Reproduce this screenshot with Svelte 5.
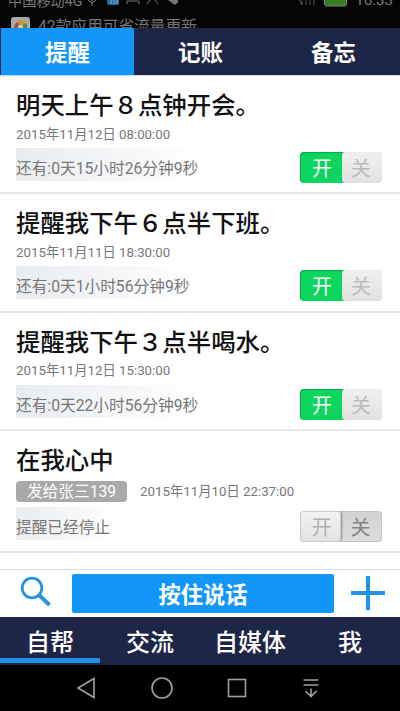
<script lang="ts">
  type Reminder = {
    title: string;
    time: string;
    status: string;
    on: boolean;
    recipient?: string;
  };

  const tabs = ['提醒', '记账', '备忘'];
  const sections = ['自帮', '交流', '自媒体', '我'];

  let activeTab = $state(0);
  let activeSection = $state(0);

  let reminders: Reminder[] = $state([
    {
      title: '明天上午８点钟开会。',
      time: '2015年11月12日 08:00:00',
      status: '还有:0天15小时26分钟9秒',
      on: true
    },
    {
      title: '提醒我下午６点半下班。',
      time: '2015年11月11日 18:30:00',
      status: '还有:0天1小时56分钟9秒',
      on: true
    },
    {
      title: '提醒我下午３点半喝水。',
      time: '2015年11月12日 15:30:00',
      status: '还有:0天22小时56分钟9秒',
      on: true
    },
    {
      title: '在我心中',
      time: '2015年11月10日 22:37:00',
      status: '提醒已经停止',
      on: false,
      recipient: '发给张三139'
    }
  ]);
</script>

<div class="phone">
  <header class="system">
    <div class="carrier">
      <span>中国移动4G</span>
      <svg class="signals" width="92" height="8" viewBox="0 0 92 8" fill="none" stroke="#777">
        <path d="M6 0v6M2 0l4 3 4-3" />
        <rect x="21" y="-5" width="12" height="10" rx="2" fill="#286f9d" stroke="none" />
        <path d="M25 0v4M28 0v4M31 0v4" stroke="#8bb5cc" />
        <path d="M41 4V1h12v3M61 4l3-4M72 4l-3-4" />
        <path d="M82 0h10v2l-3 3-3-2z" fill="#777" stroke="none" />
      </svg>
      <svg class="battery" width="54" height="8" viewBox="0 0 54 8">
        <path d="M1 0l3 5V0M8 0v5M12 0v5M16 0v5" fill="none" stroke="#555" />
        <path d="M26.500 -2v6q0 2 2 2h18q2 0 2-2v-6z" fill="#377d20" stroke="#777" />
      </svg>
      <span class="clock">16:33</span>
    </div>
    <div class="notice">
      <svg width="19" height="13" viewBox="0 0 19 13">
        <rect width="19" height="20" rx="3" fill="#aaa" />
        <path d="M3 12a7 7 0 0 1 6-8l4 4-4 5z" fill="#b24d38" />
        <path d="M6 5q6-5 10 3l-5 1z" fill="#c49b32" />
        <path d="M10 8l6-1v6h-6z" fill="#56844d" />
        <circle cx="9.500" cy="10" r="2.500" fill="#ccc" />
      </svg>
      <span>42款应用可省流量更新</span>
    </div>
  </header>

  <nav class="tabs">
    {#each tabs as tab, i (tab)}
      <button class:active={activeTab === i} onclick={() => (activeTab = i)}>{tab}</button>
    {/each}
  </nav>

  <main>
    {#each reminders as item (item.title)}
      <article class:shared={item.recipient}>
        <h2>{item.title}</h2>
        <div class="meta">
          {#if item.recipient}
            <span class="recipient">{item.recipient}</span>
          {/if}
          <time>{item.time}</time>
        </div>
        <div class="foot">
          <span class="status">{item.status}</span>
          <button class="switch" class:on={item.on} onclick={() => (item.on = !item.on)}>
            <span class="half left">开</span>
            <span class="half right">关</span>
          </button>
        </div>
      </article>
    {/each}
  </main>

  <div class="compose">
    <button class="icon" aria-label="搜索">
      <svg width="32" height="32" viewBox="0 0 32 32" fill="none" stroke="#2391e6">
        <circle cx="12" cy="12" r="9.800" stroke-width="2.800" />
        <path d="M19 19L29.500 29" stroke-width="3.800" />
      </svg>
    </button>
    <button class="talk">按住说话</button>
    <button class="icon" aria-label="添加">
      <svg width="34" height="34" viewBox="0 0 34 34" fill="none" stroke="#2391e6">
        <path d="M17 0v34M0 17h34" stroke-width="4" />
      </svg>
    </button>
  </div>

  <nav class="sections">
    {#each sections as section, i (section)}
      <button class:active={activeSection === i} onclick={() => (activeSection = i)}>
        {section}
      </button>
    {/each}
  </nav>

  <footer>
    <svg width="20" height="22" viewBox="0 0 20 22"><path d="M18 1.500v19L2 11z" /></svg>
    <svg width="22" height="22" viewBox="0 0 22 22"><circle cx="11" cy="11" r="10" /></svg>
    <svg width="20" height="20" viewBox="0 0 20 20">
      <rect x="1.500" y="1.500" width="17" height="17" />
    </svg>
    <svg width="18" height="20" viewBox="0 0 18 20">
      <path d="M1.500 2h15M1.500 7h15M9 10.500v8M3.500 13L9 18.500l5.500-5.500" />
    </svg>
  </footer>
</div>

<style>
  :global(body) {
    background: #000;
  }
  .phone {
    display: flex;
    flex-direction: column;
    width: 400px;
    height: 711px;
    overflow: hidden;
    background: #fff;
    font-family: Roboto, 'Noto Sans CJK SC', sans-serif;
  }
  button {
    padding: 0;
    border: 0;
    background: none;
    font-family: inherit;
    color: inherit;
  }
  svg {
    display: block;
    flex: none;
  }
  .system {
    flex: none;
    height: 28px;
    overflow: hidden;
    background: #050505;
    color: #777;
  }
  .carrier {
    display: flex;
    height: 8px;
    margin-bottom: 9px;
    padding: 0 7px 0 8px;
    font-size: 14.2px;
    line-height: 1;
  }
  .carrier span {
    margin-top: -6px;
    white-space: nowrap;
  }
  .signals {
    margin-left: 4px;
  }
  .battery {
    margin-left: auto;
  }
  .carrier .clock {
    margin-left: 3px;
    margin-top: -7px;
    font-size: 15.2px;
  }
  .notice {
    display: flex;
    gap: 8px;
    padding-left: 11px;
    font-size: 15.7px;
    line-height: 20px;
    color: #757575;
  }
  .tabs {
    display: flex;
    flex: none;
    height: 47px;
    padding-left: 1px;
    background: #1e2648;
    border-bottom: 1px solid #d5d8e2;
  }
  .tabs button {
    flex: 1;
    padding-bottom: 2px;
    color: #fff;
    font-size: 22.5px;
    font-weight: 700;
  }
  .tabs .active {
    background: #1296fa;
  }
  main {
    flex: 1;
    min-height: 0;
    overflow: hidden;
  }
  article {
    box-sizing: border-box;
    height: 118.6px;
    padding: 13px 18px 0 16px;
    border-bottom: 2px solid #e6e6e6;
  }
  article:first-child {
    height: 118px;
  }
  h2 {
    margin: 0;
    font-family: 'Noto Sans CJK SC', sans-serif;
    font-size: 24.4px;
    font-weight: 500;
    line-height: 30px;
    color: #111;
  }
  .meta {
    display: flex;
    align-items: center;
    gap: 13px;
    box-sizing: border-box;
    height: 29px;
    padding-top: 2px;
    font-size: 13.3px;
    line-height: 16px;
    color: #777;
  }
  .foot {
    display: flex;
    justify-content: space-between;
    align-items: flex-start;
  }
  .status {
    height: 33px;
    background: linear-gradient(100deg, #e9ecef, #f6f8fa 65%, #fff);
    font-size: 15.7px;
    line-height: 41px;
    color: #777;
  }
  .shared {
    height: 122px;
  }
  .shared .meta {
    height: 33px;
  }
  .recipient {
    width: 111px;
    border-radius: 4px;
    background: #a9a9a9;
    color: #fff;
    font-size: 15.7px;
    line-height: 21px;
    text-align: center;
  }
  .switch {
    display: flex;
    box-sizing: border-box;
    width: 82px;
    height: 31px;
    margin-top: 4px;
    border-radius: 4px;
    overflow: hidden;
    font-family: 'Noto Sans CJK SC', sans-serif;
    font-size: 20px;
    line-height: 31px;
    background: linear-gradient(#d2d2d2, #dedede);
    box-shadow: inset 0 0 0 1px #c4c4c4;
    color: #858585;
  }
  .half {
    box-sizing: border-box;
    width: 41px;
  }
  .left {
    padding-left: 2px;
    border-radius: 4px;
    background: linear-gradient(#f3f3f3, #e2e2e2);
    box-shadow:
      inset 0 0 0 1px #ccc,
      1px 0 2px #888;
    color: #b0b0b0;
  }
  .right {
    padding-right: 2px;
  }
  .on {
    background: linear-gradient(90deg, #0cd65e 55%, #e2e2e2 55%);
    box-shadow: none;
  }
  .on .left {
    width: 42px;
    border-radius: 4px 0 0 4px;
    background: #0cd65e;
    box-shadow: inset 1px 1px 1px #0aa84b;
    color: #fff;
  }
  .on .right {
    width: 40px;
    border-radius: 4px;
    background: linear-gradient(#f0f0f0, #e2e2e2);
    box-shadow: inset 0 0 1px #ccc;
    color: #bbb;
  }
  .compose {
    display: flex;
    align-items: flex-start;
    flex: none;
    box-sizing: border-box;
    height: 48px;
    padding: 4px 15px 0 20px;
    border-top: 1px solid #dcdcdc;
  }
  .compose .icon {
    margin-top: 2px;
  }
  .talk {
    width: 262px;
    height: 39px;
    margin: 0 17px 0 20px;
    padding-bottom: 2px;
    border-radius: 2px;
    background: #1296fa;
    color: #fff;
    font-size: 22.3px;
    font-weight: 700;
  }
  .sections {
    display: flex;
    flex: none;
    height: 48px;
    background: #1e2648;
  }
  .sections button {
    flex: 1;
    padding: 4px 0 5px;
    color: #fff;
    font-family: 'Noto Sans CJK SC', sans-serif;
    font-size: 24px;
    font-weight: 500;
  }
  .sections .active {
    background: linear-gradient(#2391e6, #2391e6) 0 41px / 100% 5px no-repeat;
  }
  footer {
    display: flex;
    align-items: center;
    flex: none;
    gap: 54.5px;
    height: 46px;
    padding-left: 76px;
    background: #000;
  }
  footer svg {
    fill: none;
    stroke: #a0a0a0;
    stroke-width: 1.6;
  }
</style>
